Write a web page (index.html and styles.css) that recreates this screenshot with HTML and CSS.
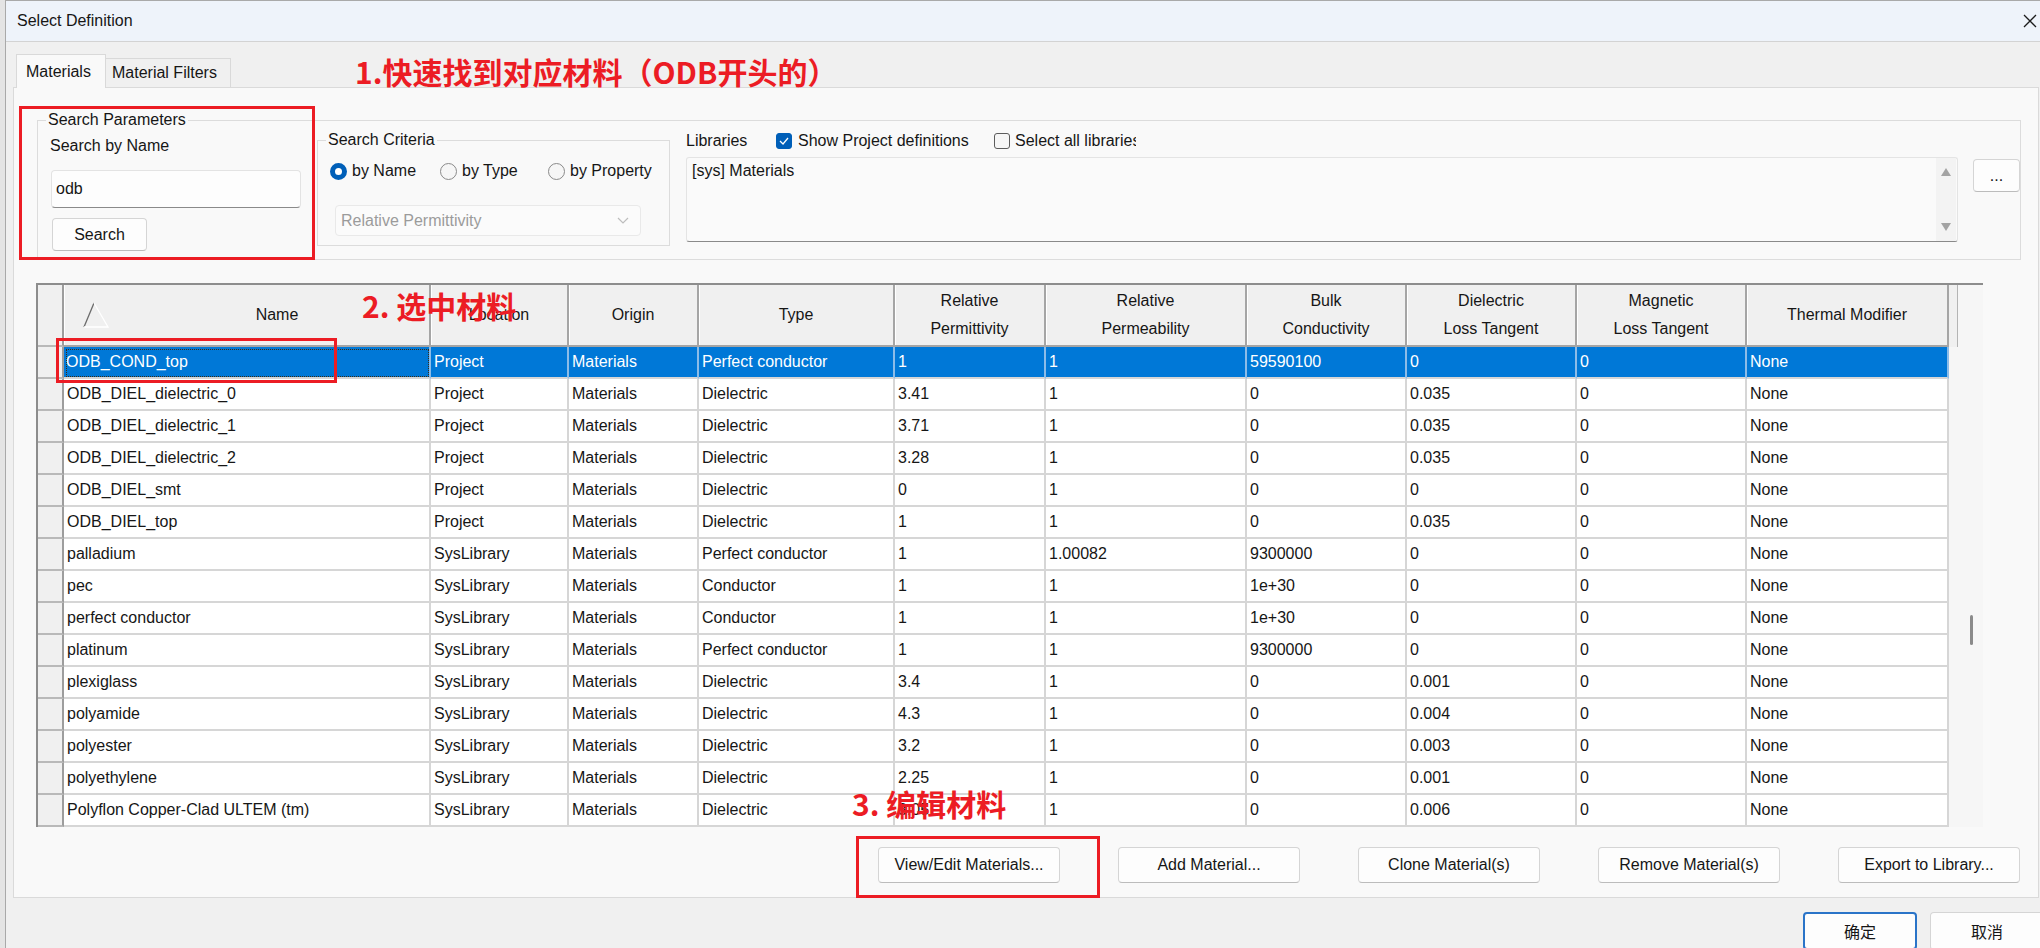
FILE: index.html
```html
<!DOCTYPE html>
<html lang="zh-CN">
<head>
  <meta charset="UTF-8" />
  <title>Select Definition</title>
  <link rel="stylesheet" href="styles.css">
</head>
<body>

  <div class="dialog">
    <div class="titlebar">
      <span>Select Definition</span>
      <svg class="close" width="14" height="14" viewBox="0 0 14 14"><path d="M1 1L13 13M13 1L1 13" stroke="#1b1b1b" stroke-width="1.3" fill="none"/></svg>
    </div>

    <div class="tabs">
      <div class="tab active">Materials</div>
      <div class="tab">Material Filters</div>
    </div>

    <div class="pane">
      <fieldset class="group search-params">
        <legend>Search Parameters</legend>
        <div class="sp-body">
          <div class="by-name">
            <div class="label">Search by Name</div>
            <div class="text-input">odb</div>
            <button class="btn btn-search">Search</button>
          </div>

          <fieldset class="group criteria">
            <legend>Search Criteria</legend>
            <div class="radios">
              <label class="radio-item w-name"><span class="radio on"></span>by Name</label>
              <label class="radio-item w-type"><span class="radio"></span>by Type</label>
              <label class="radio-item"><span class="radio"></span>by Property</label>
            </div>
            <div class="select">
              <span>Relative Permittivity</span>
              <svg width="12" height="7" viewBox="0 0 12 7"><path d="M1 1L6 6L11 1" stroke="#bdbdbd" stroke-width="1.2" fill="none"/></svg>
            </div>
          </fieldset>

          <div class="libraries">
            <div class="lib-top">
              <span class="lib-title">Libraries</span>
              <span class="check on"><svg width="10" height="8" viewBox="0 0 10 8"><path d="M1 4L4 7L9 1" stroke="#fff" stroke-width="1.3" fill="none"/></svg></span>
              <span class="chk-label show">Show Project definitions</span>
              <span class="check off"></span>
              <span class="chk-label all">Select all libraries</span>
            </div>
            <div class="lib-row">
              <div class="lib-list">
                <div class="lib-items">[sys] Materials</div>
                <div class="lib-scroll">
                  <svg width="10" height="8" viewBox="0 0 10 8"><path d="M5 0L10 8H0Z" fill="#a3a3a3"/></svg>
                  <svg width="10" height="8" viewBox="0 0 10 8"><path d="M0 0H10L5 8Z" fill="#a3a3a3"/></svg>
                </div>
              </div>
              <button class="btn btn-more">...</button>
            </div>
          </div>
        </div>
      </fieldset>

      <div class="grid">
        <div class="grid-body">
          <div class="row head">
            <div class="rh"></div>
            <div class="hc name-head">
              <svg width="26" height="26" viewBox="0 0 26 26"><path d="M1 25L11 1" stroke="#6b6b6b" stroke-width="1.3"/><path d="M11 1L25 25H1" stroke="#ffffff" stroke-width="1.3" fill="none"/></svg>
              <span>Name</span>
            </div>
            <div class="hc">Location</div>
            <div class="hc">Origin</div>
            <div class="hc">Type</div>
            <div class="hc">Relative<br>Permittivity</div>
            <div class="hc">Relative<br>Permeability</div>
            <div class="hc">Bulk<br>Conductivity</div>
            <div class="hc">Dielectric<br>Loss Tangent</div>
            <div class="hc">Magnetic<br>Loss Tangent</div>
            <div class="hc">Thermal Modifier</div>
          </div>

          <div class="row selected">
            <div class="rh"></div><div class="c focus">ODB_COND_top</div><div class="c">Project</div><div class="c">Materials</div><div class="c">Perfect conductor</div><div class="c">1</div><div class="c">1</div><div class="c">59590100</div><div class="c">0</div><div class="c">0</div><div class="c">None</div>
          </div>
          <div class="row">
            <div class="rh"></div><div class="c">ODB_DIEL_dielectric_0</div><div class="c">Project</div><div class="c">Materials</div><div class="c">Dielectric</div><div class="c">3.41</div><div class="c">1</div><div class="c">0</div><div class="c">0.035</div><div class="c">0</div><div class="c">None</div>
          </div>
          <div class="row">
            <div class="rh"></div><div class="c">ODB_DIEL_dielectric_1</div><div class="c">Project</div><div class="c">Materials</div><div class="c">Dielectric</div><div class="c">3.71</div><div class="c">1</div><div class="c">0</div><div class="c">0.035</div><div class="c">0</div><div class="c">None</div>
          </div>
          <div class="row">
            <div class="rh"></div><div class="c">ODB_DIEL_dielectric_2</div><div class="c">Project</div><div class="c">Materials</div><div class="c">Dielectric</div><div class="c">3.28</div><div class="c">1</div><div class="c">0</div><div class="c">0.035</div><div class="c">0</div><div class="c">None</div>
          </div>
          <div class="row">
            <div class="rh"></div><div class="c">ODB_DIEL_smt</div><div class="c">Project</div><div class="c">Materials</div><div class="c">Dielectric</div><div class="c">0</div><div class="c">1</div><div class="c">0</div><div class="c">0</div><div class="c">0</div><div class="c">None</div>
          </div>
          <div class="row">
            <div class="rh"></div><div class="c">ODB_DIEL_top</div><div class="c">Project</div><div class="c">Materials</div><div class="c">Dielectric</div><div class="c">1</div><div class="c">1</div><div class="c">0</div><div class="c">0.035</div><div class="c">0</div><div class="c">None</div>
          </div>
          <div class="row">
            <div class="rh"></div><div class="c">palladium</div><div class="c">SysLibrary</div><div class="c">Materials</div><div class="c">Perfect conductor</div><div class="c">1</div><div class="c">1.00082</div><div class="c">9300000</div><div class="c">0</div><div class="c">0</div><div class="c">None</div>
          </div>
          <div class="row">
            <div class="rh"></div><div class="c">pec</div><div class="c">SysLibrary</div><div class="c">Materials</div><div class="c">Conductor</div><div class="c">1</div><div class="c">1</div><div class="c">1e+30</div><div class="c">0</div><div class="c">0</div><div class="c">None</div>
          </div>
          <div class="row">
            <div class="rh"></div><div class="c">perfect conductor</div><div class="c">SysLibrary</div><div class="c">Materials</div><div class="c">Conductor</div><div class="c">1</div><div class="c">1</div><div class="c">1e+30</div><div class="c">0</div><div class="c">0</div><div class="c">None</div>
          </div>
          <div class="row">
            <div class="rh"></div><div class="c">platinum</div><div class="c">SysLibrary</div><div class="c">Materials</div><div class="c">Perfect conductor</div><div class="c">1</div><div class="c">1</div><div class="c">9300000</div><div class="c">0</div><div class="c">0</div><div class="c">None</div>
          </div>
          <div class="row">
            <div class="rh"></div><div class="c">plexiglass</div><div class="c">SysLibrary</div><div class="c">Materials</div><div class="c">Dielectric</div><div class="c">3.4</div><div class="c">1</div><div class="c">0</div><div class="c">0.001</div><div class="c">0</div><div class="c">None</div>
          </div>
          <div class="row">
            <div class="rh"></div><div class="c">polyamide</div><div class="c">SysLibrary</div><div class="c">Materials</div><div class="c">Dielectric</div><div class="c">4.3</div><div class="c">1</div><div class="c">0</div><div class="c">0.004</div><div class="c">0</div><div class="c">None</div>
          </div>
          <div class="row">
            <div class="rh"></div><div class="c">polyester</div><div class="c">SysLibrary</div><div class="c">Materials</div><div class="c">Dielectric</div><div class="c">3.2</div><div class="c">1</div><div class="c">0</div><div class="c">0.003</div><div class="c">0</div><div class="c">None</div>
          </div>
          <div class="row">
            <div class="rh"></div><div class="c">polyethylene</div><div class="c">SysLibrary</div><div class="c">Materials</div><div class="c">Dielectric</div><div class="c">2.25</div><div class="c">1</div><div class="c">0</div><div class="c">0.001</div><div class="c">0</div><div class="c">None</div>
          </div>
          <div class="row">
            <div class="rh"></div><div class="c">Polyflon Copper-Clad ULTEM (tm)</div><div class="c">SysLibrary</div><div class="c">Materials</div><div class="c">Dielectric</div><div class="c">3.05</div><div class="c">1</div><div class="c">0</div><div class="c">0.006</div><div class="c">0</div><div class="c">None</div>
          </div>
        </div>
        <div class="grid-scroll">
          <div class="scroll-head"></div>
          <div class="thumb"></div>
        </div>
      </div>

      <div class="actions">
        <button class="btn">View/Edit Materials...</button>
        <button class="btn">Add Material...</button>
        <button class="btn">Clone Material(s)</button>
        <button class="btn">Remove Material(s)</button>
        <button class="btn">Export to Library...</button>
      </div>
    </div>

    <div class="footer">
      <button class="btn btn-ok">确定</button>
      <button class="btn btn-cancel">取消</button>
    </div>
  </div>

  <!-- tutorial marks drawn over the dialog -->
  <div class="mark mark-search"></div>
  <div class="mark mark-row"></div>
  <div class="mark mark-edit"></div>
  <div class="note note-1">1.快速找到对应材料（ODB开头的）</div>
  <div class="note note-2">2. 选中材料</div>
  <div class="note note-3">3. 编辑材料</div>

</body>
</html>
```

FILE: styles.css
```css
html, body {
  margin: 0;
  height: 100%;
  overflow: hidden;
}
body {
  position: relative;
  background: #e4e4e4;
  font-family: "Liberation Sans", "Noto Sans CJK SC", sans-serif;
  font-size: 16px;
  color: #161616;
}
button {
  font: inherit;
  color: inherit;
  padding: 0;
}

.dialog {
  margin-left: 5px;
  width: 2035px;
  height: 948px;
  box-sizing: border-box;
  background: #f0f0f0;
  border-left: 1px solid #a9a9a9;
  border-top: 1px solid #a9a9a9;
  display: flex;
  flex-direction: column;
  overflow: hidden;
}
.titlebar {
  flex: none;
  height: 41px;
  box-sizing: border-box;
  background: #eef3fa;
  border-bottom: 1px solid #d3d3d3;
  display: flex;
  align-items: center;
  justify-content: space-between;
  padding: 0 3px 0 11px;
}

/* tabs */
.tabs {
  flex: none;
  height: 45px;
  display: flex;
  align-items: flex-end;
  padding-left: 10px;
}
.tab {
  box-sizing: border-box;
  border: 1px solid #d9d9d9;
  border-bottom: none;
  display: flex;
  align-items: center;
}
.tab.active {
  width: 90px;
  height: 34px;
  padding-left: 9px;
  background: #f9f9f9;
  margin-bottom: -1px;
  position: relative;
  z-index: 1;
}
.tab:not(.active) {
  width: 125px;
  height: 29px;
  padding-left: 6px;
  border-left: none;
  background: #f0f0f0;
}

.pane {
  flex: none;
  height: 811px;
  box-sizing: border-box;
  margin: 0 1px 0 7px;
  border: 1px solid #dadada;
  background: #f9f9f9;
  padding: 22px 17px 0 23px;
}

/* group boxes */
.group {
  margin: 0;
  padding: 0;
  min-width: 0;
  box-sizing: border-box;
  border: 1px solid #dcdcdc;
}
.group legend {
  margin-left: 8px;
  padding: 0 2px;
  line-height: 20px;
}
.search-params {
  height: 150px;
}
.sp-body {
  display: flex;
  align-items: flex-start;
  padding-left: 12px;
}
.by-name {
  width: 251px;
  padding-top: 6px;
}
.label {
  line-height: 20px;
}
.text-input {
  margin: 14px 0 0 1px;
  width: 250px;
  height: 38px;
  box-sizing: border-box;
  background: #fdfdfd;
  border: 1px solid #e3e3e3;
  border-bottom-color: #8a8a8a;
  border-radius: 4px;
  padding-left: 4px;
  line-height: 36px;
}
.btn {
  box-sizing: border-box;
  background: #fdfdfd;
  border: 1px solid #d5d5d5;
  border-bottom-color: #bcbcbc;
  border-radius: 4px;
  text-align: center;
  white-space: nowrap;
}
.btn-search {
  display: block;
  margin: 10px 0 0 2px;
  width: 95px;
  height: 33px;
}

.criteria {
  margin-left: 16px;
  width: 353px;
  height: 116px;
}
.radios {
  display: flex;
  margin-top: 11px;
  padding-left: 12px;
  line-height: 20px;
}
.radio-item {
  display: flex;
  align-items: center;
  gap: 5px;
}
.w-name { width: 110px; }
.w-type { width: 108px; }
.radio {
  width: 17px;
  height: 17px;
  box-sizing: border-box;
  border-radius: 50%;
  border: 1px solid #8a8a8a;
  background: #f6f6f6;
}
.radio.on {
  border: 5px solid #005fb8;
  background: #fff;
}
.select {
  margin: 24px 0 0 17px;
  width: 306px;
  height: 31px;
  box-sizing: border-box;
  background: #fbfbfb;
  border: 1px solid #e9e9e9;
  border-radius: 4px;
  padding: 0 11px 0 5px;
  display: flex;
  align-items: center;
  justify-content: space-between;
  color: #9b9b9b;
}

.libraries {
  flex: 1;
  min-width: 0;
  margin-left: 16px;
}
.lib-top {
  height: 22px;
  display: flex;
  align-items: center;
}
.lib-title {
  width: 90px;
}
.check {
  width: 16px;
  height: 16px;
  box-sizing: border-box;
  border-radius: 3px;
  border: 1px solid #5c5c5c;
  background: #f6f6f6;
  display: flex;
  align-items: center;
  justify-content: center;
}
.check.on {
  background: #005fb8;
  border-color: #005fb8;
}
.check.off {
  margin-left: 13px;
}
.chk-label {
  white-space: nowrap;
  overflow: hidden;
}
.chk-label.show {
  width: 183px;
  margin-left: 6px;
}
.chk-label.all {
  width: 121px;
  margin-left: 5px;
}
.lib-row {
  display: flex;
  align-items: flex-start;
  margin-top: 5px;
}
.lib-list {
  flex: 1;
  height: 85px;
  box-sizing: border-box;
  background: #fafafa;
  border: 1px solid #e4e4e4;
  border-bottom-color: #8a8a8a;
  border-radius: 3px;
  display: flex;
}
.lib-items {
  flex: 1;
  padding: 3px 0 0 5px;
  line-height: 20px;
}
.lib-scroll {
  width: 20px;
  margin-right: 1px;
  background: #f3f3f3;
  display: flex;
  flex-direction: column;
  align-items: center;
  justify-content: space-between;
  padding: 10px 0 10px;
}
.btn-more {
  margin: 2px 0 0 15px;
  width: 47px;
  height: 33px;
  line-height: 20px;
}

/* material grid */
.grid {
  display: flex;
  width: 1947px;
  height: 544px;
  box-sizing: border-box;
  margin: 23px 0 0 -1px;
  border-top: 2px solid #8d8d8d;
  border-left: 2px solid #8d8d8d;
  background: #f6f6f6;
  overflow: hidden;
}
.grid-body {
  width: 1911px;
  flex: none;
}
.row {
  display: grid;
  grid-template-columns: 26px 367px 138px 130px 196px 151px 201px 160px 170px 170px 202px;
  height: 32px;
}
.row.head {
  height: 62px;
}
.rh {
  box-sizing: border-box;
  background: #f0f0f0;
  border-right: 2px solid #9d9d9d;
  border-bottom: 2px solid #b9b9b9;
}
.hc {
  box-sizing: border-box;
  background: #f0f0f0;
  border-right: 2px solid #a5a5a5;
  border-bottom: 2px solid #a5a5a5;
  box-shadow: inset 1px 0 #ffffff;
  display: flex;
  align-items: center;
  justify-content: center;
  text-align: center;
  line-height: 28px;
}
.name-head {
  justify-content: flex-start;
}
.name-head svg {
  margin-left: 19px;
  flex: none;
}
.name-head span {
  flex: 1;
  padding-left: 16px;
}
.c {
  box-sizing: border-box;
  background: #fff;
  border-right: 2px solid #d6d6d6;
  border-bottom: 2px solid #d6d6d6;
  padding-left: 3px;
  line-height: 30px;
  white-space: nowrap;
  overflow: hidden;
}
.selected .c {
  background: #0078d7;
  color: #fff;
  border-right-color: #8cbce8;
}
.selected .focus {
  outline: 1px dotted #3b2a12;
  outline-offset: -3px;
  padding-left: 2px;
}
.grid-scroll {
  flex: 1;
  position: relative;
}
.scroll-head {
  width: 8px;
  height: 62px;
  background: #f0f0f0;
  border-right: 1px solid #b4b4b4;
}
.thumb {
  margin: 268px 0 0 21px;
  width: 3px;
  height: 30px;
  border-radius: 2px;
  background: #8a8a8a;
}

.actions {
  display: flex;
  justify-content: flex-end;
  gap: 58px;
  margin: 20px 1px 0 0;
}
.actions .btn {
  width: 182px;
  height: 36px;
}

.footer {
  display: flex;
  justify-content: flex-end;
  gap: 13px;
  padding-top: 14px;
  margin-right: -4px;
}
.footer .btn {
  width: 114px;
  height: 38px;
}
.btn-ok {
  border: 2px solid #2a74c8;
}

/* red tutorial marks */
.mark {
  position: absolute;
  box-sizing: border-box;
  border: 3px solid #ec1c24;
}
.mark-search { left: 19px; top: 106px; width: 296px; height: 154px; }
.mark-row { left: 56px; top: 338px; width: 281px; height: 45px; }
.mark-edit { left: 856px; top: 836px; width: 244px; height: 62px; }
.note {
  position: absolute;
  color: #ec1c24;
  font-family: "Noto Sans CJK SC", sans-serif;
  font-weight: bold;
  font-size: 30px;
  line-height: 30px;
  white-space: nowrap;
}
.note-1 { left: 355px; top: 56px; }
.note-2 { left: 362px; top: 290px; }
.note-3 { left: 852px; top: 788px; }
```
